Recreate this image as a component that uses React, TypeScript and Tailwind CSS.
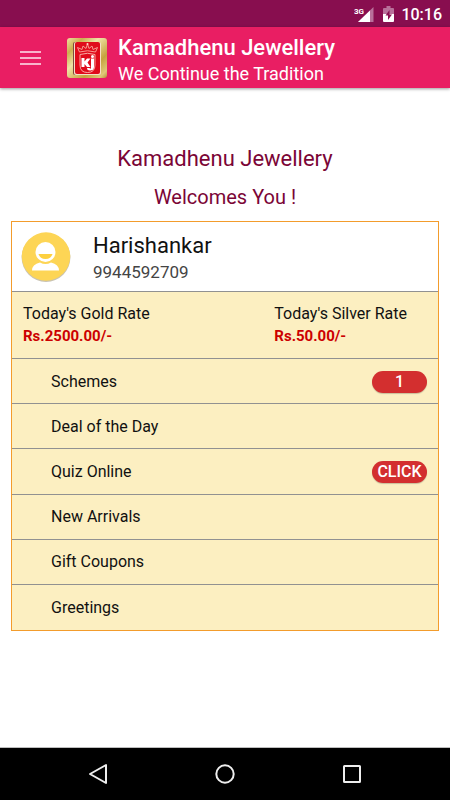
import React from "react";

const menuItems: { label: string; badge?: string }[] = [
  { label: "Schemes", badge: "1" },
  { label: "Deal of the Day" },
  { label: "Quiz Online", badge: "CLICK" },
  { label: "New Arrivals" },
  { label: "Gift Coupons" },
  { label: "Greetings" },
];

function StatusBar() {
  return (
    <div className="flex h-[27px] items-center justify-end bg-[#880e4f] pt-0.5 pr-2 text-white">
      <svg width="20" height="18" viewBox="0 0 20 18" className="mr-[9px]" aria-label="3G signal">
        <path d="M19.500 1V16H4Z" fill="#b8709a" />
        <path d="M16 4.500V16H4Z" fill="#fff" />
        <path d="M0 0H11V9H0Z" fill="#880e4f" />
        <text x="0" y="8" fontSize="8" fontWeight="700" fill="#fff" fontFamily="Roboto, sans-serif">
          3G
        </text>
      </svg>
      <svg width="12" height="18" viewBox="0 0 12 18" className="mr-[6px]" aria-label="Battery charging">
        <path d="M3.500 0h4v2H10q1 0 1 1v5H0V3q0-1 1-1h2.500z" fill="#b8709a" />
        <path d="M0 8h11v7q0 1-1 1H1q-1 0-1-1z" fill="#fff" />
        <path d="M6.500 4L2.500 9.500H5V14l4-5.500H6.500z" fill="#880e4f" />
      </svg>
      <span className="text-base font-medium">10:16</span>
    </div>
  );
}

function Logo() {
  return (
    <svg width="40" height="40" viewBox="0 0 40 40" className="ml-[26px] shrink-0" aria-label="Kamadhenu Jewellery logo">
      <defs>
        <linearGradient id="gold" x1="0" y1="0" x2="1" y2="1">
          <stop offset="0" stopColor="#efe0a0" />
          <stop offset="0.2" stopColor="#cbb04f" />
          <stop offset="0.4" stopColor="#efe3a6" />
          <stop offset="0.7" stopColor="#c5a33e" />
          <stop offset="0.9" stopColor="#dfc878" />
          <stop offset="1" stopColor="#b39034" />
        </linearGradient>
      </defs>
      <rect width="40" height="40" rx="3" fill="url(#gold)" />
      <rect x="6" y="4" width="27" height="33" rx="2" fill="#7e4b3c" />
      <rect x="7" y="4" width="27" height="33" rx="2" fill="#f7dfc8" />
      <rect x="8" y="4" width="25" height="32" rx="2" fill="#e00b1b" />
      <path d="M12.500 14L10.500 9.500l4.500 2L16 8l3 2.500L20.500 6l1.500 4.500L25 8l1 3.500 4.500-2L28.500 14Q20.500 11.500 12.500 14z" fill="none" stroke="#f79a90" strokeWidth="1" />
      <circle cx="20.500" cy="6" r="1" fill="#ffd6cf" />
      <path d="M13 16.500Q20.500 14 28 16.500V27q0 7.500-7.500 7.500T13 27z" fill="none" stroke="#f9aaa2" strokeWidth="1" />
      <path d="M14.500 20h3v3.500l2.500-3h3.500l-3 4 3 4.500h-3.500L17.500 26v3h-3zM24 20.500h3V29q0 3.500-4 3.500-3 0-3-2.500h2.500q.2.800.8.800.7 0 .7-1.500z" fill="#fff" />
      <circle cx="25.500" cy="18.500" r="1.500" fill="#fff" />
    </svg>
  );
}

function Header() {
  return (
    <header className="relative flex h-[61px] items-center bg-[#e91e63] pl-5 text-white shadow-[0_1px_3px_rgba(0,0,0,0.4)]">
      <button type="button" aria-label="Open menu" className="flex w-[21px] flex-col gap-1">
        <span className="h-0.5 bg-[#f8b4cb]" />
        <span className="h-0.5 bg-[#f8b4cb]" />
        <span className="h-0.5 bg-[#f8b4cb]" />
      </button>
      <Logo />
      <div className="ml-[11px] pt-[7px]">
        <h1 className="text-[22px] leading-[26px] font-medium">Kamadhenu Jewellery</h1>
        <p className="text-[18px] leading-[26px]">We Continue the Tradition</p>
      </div>
    </header>
  );
}

function Avatar() {
  return (
    <svg width="50" height="50" viewBox="0 0 50 50" className="shrink-0" aria-label="Profile picture">
      <circle cx="25" cy="25.500" r="24.400" fill="#c9c3b2" />
      <circle cx="25" cy="24.500" r="24.200" fill="#fdd555" />
      <circle cx="24.500" cy="20" r="10" fill="#fff" />
      <path d="M17.500 22h14q-1.500 5-7 5t-7-5z" fill="#fdd03f" />
      <path d="M11 38.500q0-6 8-8 5.500 3 11 0 8 2 8 8z" fill="#fff" />
    </svg>
  );
}

function Rate({ title, value }: { title: string; value: string }) {
  return (
    <div>
      <h3 className="text-base leading-[22px]">{title}</h3>
      <p className="text-[15px] leading-[22px] font-bold text-[#cc0000]">{value}</p>
    </div>
  );
}

function NavigationBar() {
  return (
    <nav className="flex h-[53px] items-center justify-around border-t border-[#bdbdbd] bg-black px-[35px]">
      <button type="button" aria-label="Back">
        <svg width="22" height="22" viewBox="0 0 22 22" fill="none" stroke="#eee" strokeWidth="2" strokeLinejoin="round">
          <path d="M19 2v18L3 11z" />
        </svg>
      </button>
      <button type="button" aria-label="Home">
        <svg width="22" height="22" viewBox="0 0 22 22" fill="none" stroke="#eee" strokeWidth="2">
          <circle cx="11" cy="11" r="8.700" />
        </svg>
      </button>
      <button type="button" aria-label="Recent apps">
        <svg width="22" height="22" viewBox="0 0 22 22" fill="none" stroke="#eee" strokeWidth="2">
          <rect x="3" y="3" width="16" height="16" rx="0.500" />
        </svg>
      </button>
    </nav>
  );
}

export default function App() {
  return (
    <div className="flex min-h-screen flex-col bg-white font-[Roboto,sans-serif] text-[#111]">
      <StatusBar />
      <Header />
      <main className="flex-1 px-[11px] pt-[52px]">
        <div className="text-center text-[#7b0536]">
          <h2 className="text-[22px] leading-[38px]">Kamadhenu Jewellery</h2>
          <p className="text-[20px] leading-[38px]">Welcomes You !</p>
        </div>
        <section className="mt-[5px] border border-[#f39c2c] bg-[#fcefc1]">
          <div className="flex h-[70px] items-center gap-[22px] border-b border-[#919191] bg-white pl-[9px]">
            <Avatar />
            <div className="pt-1">
              <h2 className="text-[22px] leading-[26px]">Harishankar</h2>
              <p className="text-[17px] leading-[26px] text-[#444]">9944592709</p>
            </div>
          </div>
          <div className="flex h-[67px] items-center justify-between border-b border-[#919191] pr-[31px] pl-[11px]">
            <Rate title="Today's Gold Rate" value="Rs.2500.00/-" />
            <Rate title="Today's Silver Rate" value="Rs.50.00/-" />
          </div>
          <ul className="grid h-[271px] auto-rows-fr divide-y divide-[#919191]">
            {menuItems.map((item) => (
              <li key={item.label} className="flex">
                <button type="button" className="flex flex-1 items-center justify-between pt-px pr-[11px] pl-[39px] text-base">
                  {item.label}
                  {item.badge && (
                    <span className="flex h-[22px] w-[55px] items-center justify-center rounded-full bg-[#d32f2f] text-base font-medium text-white shadow-[0_1px_1px_rgba(0,0,0,0.2)]">
                      {item.badge}
                    </span>
                  )}
                </button>
              </li>
            ))}
          </ul>
        </section>
      </main>
      <NavigationBar />
    </div>
  );
}
